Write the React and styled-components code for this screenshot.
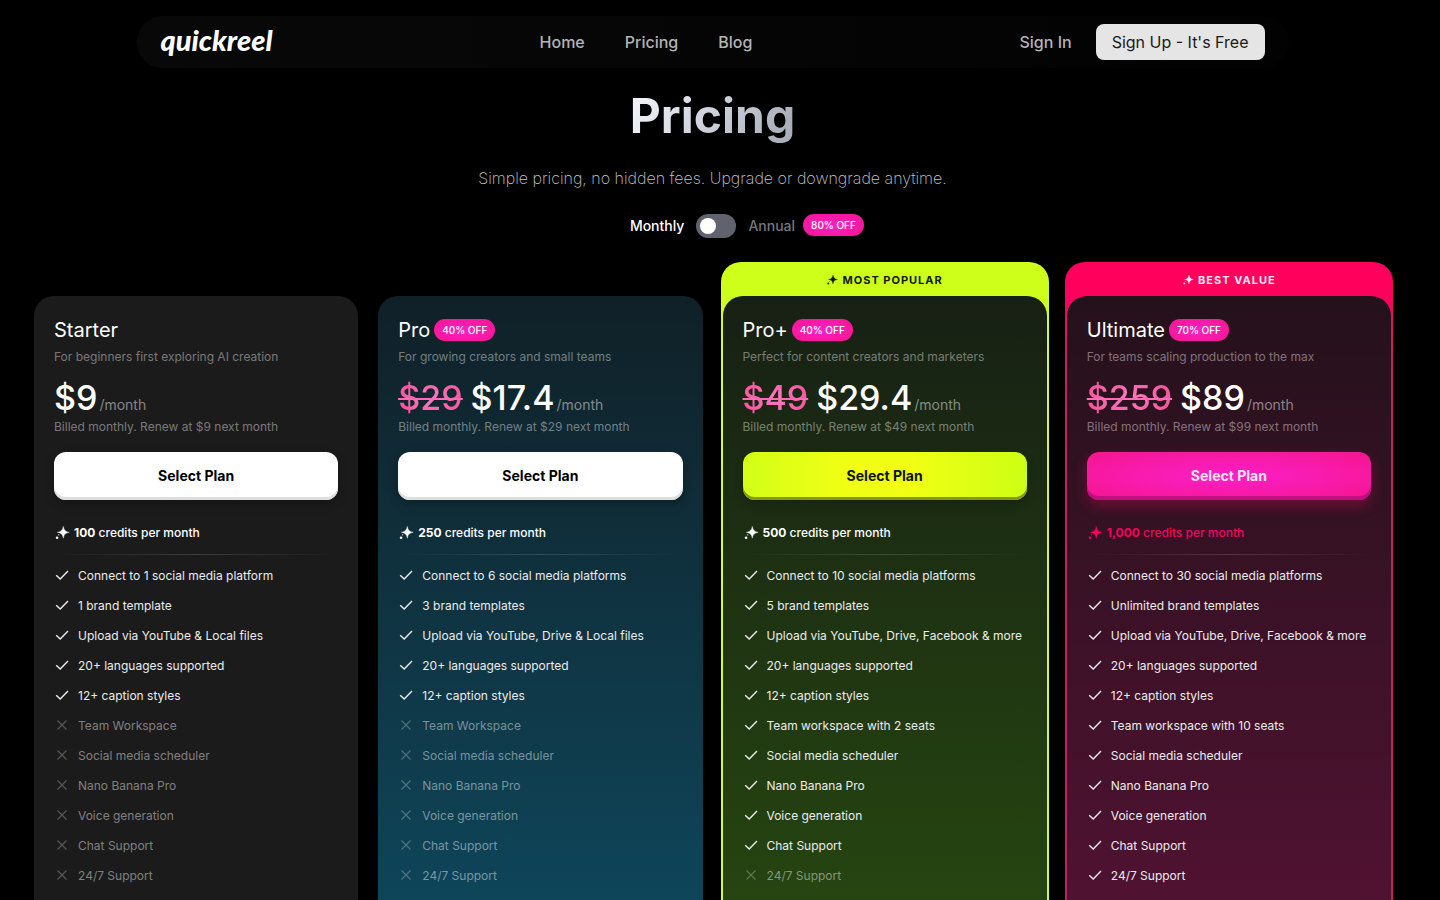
import React, { useState } from 'react'
import styled, { createGlobalStyle, css } from 'styled-components'

const GlobalStyle = createGlobalStyle`
  * {
    box-sizing: border-box;
  }

  html {
    background: #000;
  }

  body {
    margin: 0;
    background: #000;
    color: #fff;
    font-family: Inter, "Liberation Sans", sans-serif;
  }

  h1, h2, p, ul {
    margin: 0;
    padding: 0;
    font-weight: 400;
  }

  button {
    font-family: inherit;
    cursor: pointer;
  }
`

const pinkGlow = 'radial-gradient(ellipse at center, #fb1fc8 0%, #f5168e 100%)'

const Page = styled.div`
  padding: 16px 49px 60px 34px;
`

const Header = styled.header`
  display: flex;
  align-items: center;
  justify-content: space-between;
  max-width: 1152px;
  height: 52px;
  margin: 0 auto;
  padding: 0 24px;
  border-radius: 26px;
  background: linear-gradient(90deg, #080808, #020202);
`

const Logo = styled.a`
  padding-bottom: 4px;
  color: #fff;
  font-family: Lato, sans-serif;
  font-size: 29px;
  line-height: 32px;
  font-weight: 900;
  font-style: italic;
  text-decoration: none;
`

const NavLinks = styled.nav`
  display: flex;
  gap: 40px;
`

const NavLink = styled.a`
  color: #b4b4b4;
  font-size: 16px;
  line-height: 24px;
  font-weight: 500;
  text-decoration: none;
`

const Account = styled.div`
  display: flex;
  align-items: center;
  gap: 24px;
`

const SignUp = styled.button`
  height: 36px;
  padding: 0 16px;
  border: 0;
  border-radius: 8px;
  background: #e5e5e5;
  color: #1a1a1a;
  font-size: 16px;
`

const Intro = styled.section`
  display: flex;
  flex-direction: column;
  align-items: center;
  padding-top: 16px;
`

const Title = styled.h1`
  background: linear-gradient(120deg, #f0f1f8 10%, #a9afba 90%);
  background-clip: text;
  color: transparent;
  font-size: 48px;
  line-height: 64px;
  font-weight: 700;
`

const Subtitle = styled.p`
  margin-top: 18px;
  color: #c6c6ca;
  font-size: 16px;
  line-height: 24px;
  font-weight: 200;
`

const Billing = styled.div`
  position: relative;
  display: flex;
  align-items: center;
  gap: 12px;
  margin-top: 24px;
  font-size: 14px;
  line-height: 24px;
  font-weight: 500;
`

const BillingLabel = styled.span`
  color: ${(props) => (props.$active ? '#fff' : '#77777b')};
`

const Switch = styled.input`
  appearance: none;
  width: 40px;
  height: 24px;
  margin: 0;
  padding: 4px;
  border-radius: 12px;
  background: #60626d;
  cursor: pointer;

  &::before {
    content: "";
    display: block;
    width: 16px;
    height: 16px;
    border-radius: 50%;
    background: #fff;
  }

  &:checked::before {
    margin-left: auto;
  }
`

const Badge = styled.span`
  padding: 0 8px;
  border-radius: 11px;
  background: ${pinkGlow};
  color: #fff;
  font-size: 10px;
  line-height: 22px;
  font-weight: 500;
  white-space: nowrap;
`

const AnnualBadge = styled(Badge)`
  position: absolute;
  top: 0;
  left: 100%;
  margin-left: 8px;
`

const Plans = styled.main`
  display: grid;
  grid-template-columns: repeat(4, minmax(0, 1fr));
  align-items: end;
  gap: 20px;
  margin-top: 24px;
`

const Card = styled.article`
  border-radius: 20px;
  ${(props) =>
    props.$frame &&
    css`
      margin: 0 -2px -2px;
      padding: 0 2px 2px;
      background: linear-gradient(${props.$frame}, ${props.$frame} 30px, ${props.$edge} 100px);
    `}
`

const Ribbon = styled.div`
  display: flex;
  align-items: center;
  justify-content: center;
  gap: 4px;
  height: 34px;
  padding-top: 2px;
  color: ${(props) => props.$color};
  font-size: 11px;
  line-height: 16px;
  font-weight: 700;
  letter-spacing: 1px;
`

const CardBody = styled.div`
  padding: 22px 20px 48px;
  border-radius: 20px;
  background: ${(props) => props.$background};
`

const NameRow = styled.div`
  display: flex;
  align-items: center;
  gap: 4px;
`

const PlanName = styled.h2`
  font-size: 20px;
  line-height: 24px;
`

const Note = styled.p`
  color: rgba(255, 255, 255, 0.42);
  font-size: 12px;
  line-height: 16px;
`

const Description = styled(Note)`
  margin-top: 7px;
`

const PriceRow = styled.p`
  display: flex;
  align-items: baseline;
  height: 42px;
  margin-top: 12px;
  font-size: 34px;
  line-height: 42px;
`

const OldPrice = styled.s`
  margin-right: 8px;
  background: radial-gradient(ellipse at center, #ff7cc4 0%, #f5478f 100%);
  background-clip: text;
  color: transparent;
  font-weight: 500;
  text-decoration-color: #ff6ab8;
  text-decoration-thickness: 2px;
`

const Price = styled.span`
  font-weight: 500;
`

const Period = styled.span`
  margin-left: 2px;
  color: rgba(255, 255, 255, 0.48);
  font-size: 14px;
`

const buttonLooks = {
  white: css`
    background: #fff;
    color: #000;
    box-shadow: inset 0 -3px 0 #dedede, 0 4px 10px rgba(0, 0, 0, 0.25);
  `,
  lime: css`
    background: linear-gradient(90deg, #d2ff17, #f0ff14 35%, #f0ff14 60%, #ccff14);
    color: #0c1400;
    box-shadow: inset 0 -3px 0 #869910, 0 4px 10px rgba(0, 0, 0, 0.2);
  `,
  pink: css`
    background: ${pinkGlow};
    color: #ffe4f6;
    box-shadow: inset 0 -4px 0 #bf0f82, 0 6px 14px rgba(255, 0, 92, 0.3);
  `,
}

const SelectButton = styled.button`
  width: 100%;
  height: 48px;
  margin-top: 17px;
  padding-bottom: 2px;
  border: 0;
  border-radius: 12px;
  font-size: 14px;
  font-weight: 700;
  ${(props) => buttonLooks[props.$look]}
`

const Credits = styled.p`
  display: flex;
  align-items: center;
  gap: 4px;
  margin-top: 24px;
  color: ${(props) => props.$color};
  font-size: 12px;
  line-height: 18px;
  font-weight: 500;
`

const Divider = styled.hr`
  height: 1px;
  margin: 12px 0;
  border: 0;
  background: linear-gradient(90deg, transparent, rgba(255, 255, 255, 0.15), transparent);
`

const Features = styled.ul`
  display: flex;
  flex-direction: column;
  gap: 12px;
  list-style: none;
`

const Feature = styled.li`
  display: flex;
  align-items: flex-start;
  gap: 8px;
  color: ${(props) => (props.$off ? 'rgba(255, 255, 255, 0.45)' : '#ececec')};
  font-size: 12px;
  line-height: 18px;
`

const FeatureIcon = styled.svg`
  flex: none;
  opacity: ${(props) => (props.$off ? 0.6 : 1)};
`

const Sparkle = ({ size }) => (
  <svg width={size} height={size} viewBox="0 0 16 16" fill="currentColor" aria-hidden="true">
    <path d="M9.3 1.4c.7 3.800 2.100 5.200 5.900 5.900-3.800.7-5.200 2.100-5.900 5.900-.7-3.800-2.100-5.200-5.900-5.900 3.800-.7 5.200-2.100 5.900-5.900z" stroke="currentColor" strokeWidth="0.4" strokeLinejoin="round" />
    <circle cx="4.7" cy="9.8" r="0.6" />
    <circle cx="3.1" cy="12.7" r="1.3" />
  </svg>
)

const Mark = ({ off }) => (
  <FeatureIcon
    $off={off}
    width="16"
    height="16"
    viewBox="0 0 16 16"
    fill="none"
    stroke="currentColor"
    strokeWidth={off ? 1.1 : 1.4}
    aria-hidden="true"
  >
    {off ? <path d="M3.5 3.5l9 9M12.5 3.5l-9 9" /> : <path d="M2.2 8.2l4 3.8L14 4" />}
  </FeatureIcon>
)

const common = ['20+ languages supported', '12+ caption styles']
const extras = ['Social media scheduler', 'Nano Banana Pro', 'Voice generation', 'Chat Support', '24/7 Support']

const plans = [
  {
    name: 'Starter',
    description: 'For beginners first exploring AI creation',
    price: '$9',
    renew: '$9',
    credits: '100',
    look: 'white',
    background: '#1b1b1b',
    included: 5,
    features: ['Connect to 1 social media platform', '1 brand template', 'Upload via YouTube & Local files', ...common, 'Team Workspace', ...extras],
  },
  {
    name: 'Pro',
    discount: '40% OFF',
    description: 'For growing creators and small teams',
    oldPrice: '$29',
    price: '$17.4',
    renew: '$29',
    credits: '250',
    look: 'white',
    background: 'linear-gradient(#102027, #0e475c)',
    included: 5,
    features: ['Connect to 6 social media platforms', '3 brand templates', 'Upload via YouTube, Drive & Local files', ...common, 'Team Workspace', ...extras],
  },
  {
    name: 'Pro+',
    ribbon: 'MOST POPULAR',
    ribbonColor: '#0f1a00',
    frame: '#ceff1a',
    edge: '#d3f84d',
    discount: '40% OFF',
    description: 'Perfect for content creators and marketers',
    oldPrice: '$49',
    price: '$29.4',
    renew: '$49',
    credits: '500',
    look: 'lime',
    background: 'linear-gradient(#172014, #264710)',
    included: 10,
    features: ['Connect to 10 social media platforms', '5 brand templates', 'Upload via YouTube, Drive, Facebook & more', ...common, 'Team workspace with 2 seats', ...extras],
  },
  {
    name: 'Ultimate',
    ribbon: 'BEST VALUE',
    ribbonColor: '#ffe9f1',
    frame: '#ff005c',
    edge: '#c4215c',
    discount: '70% OFF',
    description: 'For teams scaling production to the max',
    oldPrice: '$259',
    price: '$89',
    renew: '$99',
    credits: '1,000',
    creditsColor: '#f5045e',
    look: 'pink',
    background: 'linear-gradient(#24111b, #521232)',
    included: 11,
    features: ['Connect to 30 social media platforms', 'Unlimited brand templates', 'Upload via YouTube, Drive, Facebook & more', ...common, 'Team workspace with 10 seats', ...extras],
  },
]

const PlanCard = ({ plan }) => (
  <Card $frame={plan.frame} $edge={plan.edge}>
    {plan.ribbon && (
      <Ribbon $color={plan.ribbonColor}>
        <Sparkle size={12} />
        {plan.ribbon}
      </Ribbon>
    )}
    <CardBody $background={plan.background}>
      <NameRow>
        <PlanName>{plan.name}</PlanName>
        {plan.discount && <Badge>{plan.discount}</Badge>}
      </NameRow>
      <Description>{plan.description}</Description>
      <PriceRow>
        {plan.oldPrice && <OldPrice>{plan.oldPrice}</OldPrice>}
        <Price>{plan.price}</Price>
        <Period>/month</Period>
      </PriceRow>
      <Note>Billed monthly. Renew at {plan.renew} next month</Note>
      <SelectButton $look={plan.look}>Select Plan</SelectButton>
      <Credits $color={plan.creditsColor || '#fff'}>
        <Sparkle size={16} />
        <span>
          <b>{plan.credits}</b> credits per month
        </span>
      </Credits>
      <Divider />
      <Features>
        {plan.features.map((feature, index) => {
          const off = index >= plan.included
          return (
            <Feature key={feature} $off={off}>
              <Mark off={off} />
              {feature}
            </Feature>
          )
        })}
      </Features>
    </CardBody>
  </Card>
)

export default function App() {
  const [annual, setAnnual] = useState(false)

  return (
    <>
      <GlobalStyle />
      <Page>
        <Header>
          <Logo href="#">quickreel</Logo>
          <NavLinks>
            <NavLink href="#home">Home</NavLink>
            <NavLink href="#pricing">Pricing</NavLink>
            <NavLink href="#blog">Blog</NavLink>
          </NavLinks>
          <Account>
            <NavLink href="#signin">Sign In</NavLink>
            <SignUp>Sign Up - It's Free</SignUp>
          </Account>
        </Header>
        <Intro>
          <Title>Pricing</Title>
          <Subtitle>Simple pricing, no hidden fees. Upgrade or downgrade anytime.</Subtitle>
          <Billing>
            <BillingLabel $active={!annual}>Monthly</BillingLabel>
            <Switch
              type="checkbox"
              role="switch"
              aria-label="Annual billing"
              checked={annual}
              onChange={(event) => setAnnual(event.target.checked)}
            />
            <BillingLabel $active={annual}>Annual</BillingLabel>
            <AnnualBadge>80% OFF</AnnualBadge>
          </Billing>
        </Intro>
        <Plans>
          {plans.map((plan) => (
            <PlanCard key={plan.name} plan={plan} />
          ))}
        </Plans>
      </Page>
    </>
  )
}
